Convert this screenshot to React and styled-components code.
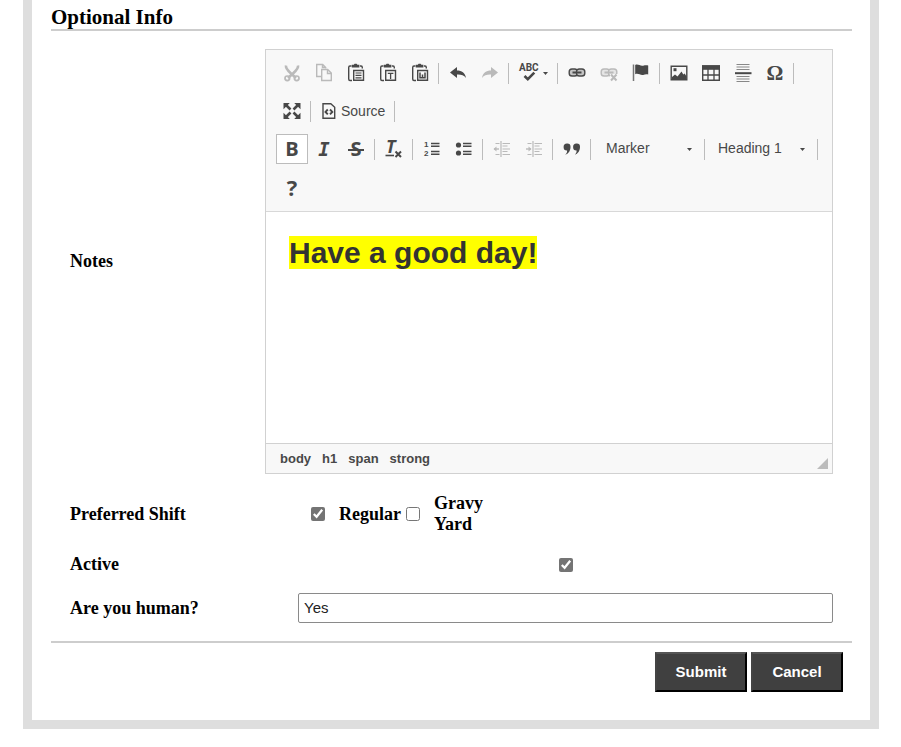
import React from "react";
import styled, { createGlobalStyle } from "styled-components";

const sans = '"Liberation Sans", Arial, sans-serif';
const serif = '"Liberation Serif", "Times New Roman", serif';
const ink = "#484848";

const GlobalStyle = createGlobalStyle`
  *, *::before, *::after { box-sizing: border-box; }
  body { margin: 0; background: #fff; color: #000; font-family: ${serif}; }
`;

const Panel = styled.form`
  margin: 0 22px 18px 23px;
  padding: 4px 18px 28px 19px;
  border: 9px solid #dedede;
  border-top: 0;
  background: #fff;
`;

const SectionTitle = styled.h2`
  margin: 0 0 18px;
  height: 27px;
  border-bottom: 2px solid #cdcdcd;
  font-size: 21px;
  line-height: 26px;
  font-weight: bold;
`;

const Row = styled.div`
  display: grid;
  grid-template-columns: 195px minmax(0, 1fr);
  align-items: center;
  padding: 0 19px;
  min-height: ${(p) => p.$height || 44}px;
`;

const labelText = `
  font-size: 18px;
  line-height: 21px;
  font-weight: bold;
`;

const Label = styled.label`${labelText}`;
const GroupLabel = styled.span`${labelText}`;

const Field = styled.div`
  display: flex;
  align-items: center;
  justify-content: ${(p) => (p.$center ? "center" : "flex-start")};
  padding-left: 33px;
`;

const Shifts = styled.div`
  display: flex;
  align-items: center;
  gap: 5px;
  padding-left: 46px;
`;

const CheckBox = styled.input.attrs({ type: "checkbox" })`
  flex: none;
  width: 14px;
  height: 14px;
  margin: 0;
  accent-color: #747474;
`;

const Choice = styled.label`
  display: flex;
  align-items: center;
  gap: 14px;
  ${labelText}
`;

const ChoiceText = styled.span`
  max-width: 64px;
`;

const TextInput = styled.input`
  width: 100%;
  height: 30px;
  padding: 0 5px 2px;
  border: 1px solid #8a8a8a;
  border-radius: 2px;
  background: #fff;
  color: #222;
  font: 15px ${sans};
`;

const Editor = styled.div`
  border: 1px solid #d1d1d1;
  font-family: ${sans};
  color: ${ink};
`;

const Toolbar = styled.div`
  padding: 4px 9px 5px 10px;
  border-bottom: 1px solid #d8d8d8;
  background: #f8f8f8;
`;

const ToolLine = styled.div`
  display: flex;
  flex-wrap: wrap;
`;

const ToolGroup = styled.div`
  display: flex;
  align-items: center;
  height: 38px;
`;

const Separator = styled.span`
  width: 1px;
  height: 21px;
  margin: 0 3px 0 2px;
  background: #bcbcbc;
`;

const ToolButton = styled.button`
  display: flex;
  align-items: center;
  justify-content: center;
  gap: 4px;
  min-width: 32px;
  height: 30px;
  padding: 0 ${(p) => (p.$wide ? 6 : 2)}px;
  border: 1px solid ${(p) => (p.$on ? "#bcbcbc" : "transparent")};
  background: ${(p) => (p.$on ? "#fff" : "transparent")};
  color: ${ink};
  opacity: ${(p) => (p.disabled ? 0.35 : 1)};
  font: 14px ${sans};
`;

const Letter = styled.span`
  font: bold 20px/20px "Open Sans", ${sans};
`;

const HelpMark = styled.span`
  font: bold 22px/22px "Open Sans", ${sans};
`;

const ItalicLetter = styled.span`
  font: italic bold 19px/20px "DejaVu Sans Mono", monospace;
`;

const StruckLetter = styled(Letter)`
  padding: 0 2px;
  background: linear-gradient(${ink}, ${ink}) 0 10px / 100% 2px no-repeat;
`;

const Omega = styled.span`
  font: bold 21px/20px ${serif};
`;

const Combo = styled.div`
  position: relative;
  width: ${(p) => p.$width}px;
`;

const ComboSelect = styled.select`
  appearance: none;
  width: 100%;
  height: 30px;
  padding: 0 24px 2px ${(p) => p.$inset}px;
  border: 0;
  background: transparent;
  color: ${ink};
  font: 14px ${sans};
`;

const ComboCaret = styled.svg`
  position: absolute;
  right: 10px;
  top: 14px;
  pointer-events: none;
`;

const EditArea = styled.div`
  height: 231px;
  padding: 23px;
  outline: 0;
  background: #fff;
  color: #333;
`;

const EditHeading = styled.h1`
  margin: 0;
  font-size: 30px;
  line-height: 36px;
  font-weight: bold;
`;

const Marked = styled.span`
  background: #ff0;
`;

const StatusBar = styled.div`
  display: flex;
  align-items: center;
  justify-content: space-between;
  height: 30px;
  padding: 0 4px 0 14px;
  border-top: 1px solid #d1d1d1;
  background: #f8f8f8;
`;

const Path = styled.nav`
  display: flex;
  gap: 11px;
`;

const PathLink = styled.a`
  color: ${ink};
  font-size: 13px;
  line-height: 16px;
  font-weight: bold;
  text-decoration: none;
`;

const Grip = styled.svg`
  align-self: flex-end;
  margin-bottom: 4px;
`;

const Actions = styled.div`
  display: flex;
  justify-content: flex-end;
  gap: 4px;
  padding: 9px 9px 0;
  border-top: 2px solid #cdcdcd;
`;

const ActionButton = styled.button`
  width: 92px;
  height: 40px;
  padding: 0 0 2px;
  border: 2px solid;
  border-color: #555 #000 #000 #444;
  background: #404040;
  color: #fff;
  font: bold 15px ${sans};
`;

const Drawing = styled.svg`
  overflow: visible;
`;

const Svg = ({ children, width = 20 }) => (
  <Drawing width={width} height="20" viewBox={`0 0 ${width} 20`} fill="none" stroke={ink} strokeWidth="1.4" aria-hidden="true">
    {children}
  </Drawing>
);

const CutIcon = () => (
  <Svg>
    <path d="M4 2.500c-.6 2.500 1.500 4.800 5 8l5 4.500M16 2.500c.6 2.500-1.500 4.800-5 8L6 15" strokeWidth="2.600" />
    <circle cx="5.300" cy="15.300" r="2.300" strokeWidth="1.700" />
    <circle cx="14.700" cy="15.300" r="2.300" strokeWidth="1.700" />
  </Svg>
);

const CopyIcon = () => (
  <Svg>
    <path d="M7 13.500H2.700v-12h6l3 3v1M8.500 1.500v3h3" />
    <path d="M7.700 6.500h6l3.600 3.600v7.400H7.700zM13.500 6.500v4h4" />
  </Svg>
);

const PasteIcon = ({ children }) => (
  <Svg>
    <path d="M5.500 3H4Q2.700 3 2.700 4.500V16q0 1.500 1.300 1.500h2M14 3h1q1.300 0 1.300 1.500v1" />
    <path d="M5.800 1.800h2l.8-1h2l.8 1h2v2.600H5.800z" fill={ink} stroke="none" />
    <path d="M7.700 7.500h9.800v9.800H7.700z" fill="#f8f8f8" />
    {children}
  </Svg>
);

const ArrowIcon = ({ flip }) => (
  <Svg>
    <path
      d="M2 9.500l7-5.500v3.500c4.800 0 8 2 9 7.500-2.200-2.800-5-3.600-9-3.400V15z"
      transform={flip ? "matrix(-1 0 0 1 20 0)" : undefined}
      fill={ink}
      stroke="none"
    />
  </Svg>
);

const SpellIcon = () => (
  <Svg>
    <text x="0" y="8" fill={ink} stroke="none" fontFamily="Roboto" fontSize="10" fontWeight="bold">ABC</text>
    <path d="M5.500 13l3.300 3.200 6.500-6.500" strokeWidth="2.600" />
  </Svg>
);

const LinkIcon = ({ broken }) => (
  <Svg>
    <rect x="2.200" y="6" width="8.300" height="7" rx="2.800" fill="#c4c4c4" />
    <rect x="9.500" y="6" width="8.300" height="7" rx="2.800" fill="#c4c4c4" />
    <path d="M5.500 9.500h9" strokeWidth="2" />
    {broken && (
      <>
        <path d="M11 11h9v8h-9z" fill="#f8f8f8" stroke="none" />
        <path d="M12 11.500l5.500 6M17.500 11.500l-5.500 6" strokeWidth="2" />
      </>
    )}
  </Svg>
);

const FlagIcon = () => (
  <Svg>
    <path d="M2.500 1.500V18" stroke="#777" strokeWidth="1.500" />
    <path d="M4.200 2c3-1.400 5 1.500 8 .7 2-.6 3.500-.6 5-.2v9c-2-.6-3.500 0-5 .5-3 .6-5-2.200-8-.7z" fill={ink} stroke="none" />
  </Svg>
);

const ImageIcon = () => (
  <Svg>
    <path d="M2.200 3.200h15.600v13.600H2.200z" />
    <path d="M3 16v-2l3-2.500L8.500 13.500l4-5 1.800 3 1.400-1 1.800 3V16z" fill={ink} stroke="none" />
    <path d="M4.500 5.200h3v3h-3z" fill={ink} stroke="none" />
  </Svg>
);

const TableIcon = () => (
  <Svg>
    <path d="M1.700 3h16.600v14.300H1.700z" />
    <path d="M1 2.300h18v4.500H1z" fill={ink} stroke="none" />
    <path d="M7 6v11M13 6v11M2 12h16" strokeWidth="1.300" />
  </Svg>
);

const RuleIcon = () => (
  <Svg>
    <path d="M3.500 1.500h13M3.500 4h13M3.500 6.500h13M3.500 13.500h13M3.500 16h13M3.500 18.500h13" stroke="#888" strokeWidth="1" />
    <path d="M2 10.200h16.500" strokeWidth="2" />
  </Svg>
);

const MaximizeIcon = () => (
  <Svg>
    <path d="M4 4l4.500 4.500M16 4l-4.500 4.500M4 16l4.500-4.500M16 16l-4.500-4.500" strokeWidth="2.600" />
    <path d="M1.500 2h6.300l-6.300 6.300zM18.500 2h-6.300l6.300 6.300zM1.500 18h6.300l-6.300-6.300zM18.500 18h-6.300l6.300-6.300z" fill={ink} stroke="none" />
  </Svg>
);

const SourceIcon = () => (
  <Svg width={16}>
    <path d="M2 2.700h7.800l3.900 3.600v11H2z" strokeWidth="1.400" />
    <path d="M6.800 8.500l-2.300 2.400 2.300 2.400M9 8.500l2.300 2.400L9 13.300" strokeWidth="1.900" />
  </Svg>
);

const ClearIcon = () => (
  <Svg>
    <text x="2" y="14" fill={ink} stroke="none" fontFamily="Open Sans" fontSize="18" fontStyle="italic" fontWeight="bold">T</text>
    <path d="M1.500 16.500H10" strokeWidth="1.600" />
    <path d="M11.500 12.500l5.500 5.500M17 12.500l-5.500 5.500" strokeWidth="2" />
  </Svg>
);

const ListIcon = ({ numbered }) => (
  <Svg>
    {numbered ? (
      <g fill={ink} stroke="none" fontFamily="Liberation Sans" fontSize="8" fontWeight="bold">
        <text x="2" y="8">1</text>
        <text x="2" y="17">2</text>
      </g>
    ) : (
      <g fill={ink} stroke="none">
        <circle cx="4.500" cy="6" r="2.600" />
        <circle cx="4.500" cy="14" r="2.600" />
      </g>
    )}
    <path d="M9 4.500h8.500M9 7.300h8.500M9 12.500h8.500M9 15.300h8.500" strokeWidth="1.400" />
  </Svg>
);

const IndentIcon = ({ outward }) => (
  <Svg>
    <path d="M3.500 4.500h4M3.500 15.500h4M10.500 4.500H18M10.500 7h5M10.500 10H18M10.500 12.500h5M10.500 15.500H18" strokeWidth="1.200" />
    <path d="M9 2v16" strokeWidth="1.200" />
    <path d="M2 10h5" strokeWidth="1.400" />
    <path d={outward ? "M1.500 10l3-2.600v5.200z" : "M7.500 10l-3-2.600v5.200z"} fill={ink} stroke="none" />
  </Svg>
);

const QuoteIcon = () => (
  <Svg>
    <path
      d="M5 4.500a3.300 3.300 0 0 1 3.500 3.300c0 4-2 7-5.300 8 1.600-1.500 2-2.800 1.900-4.300A3.400 3.400 0 0 1 1.600 8 3.400 3.400 0 0 1 5 4.500zM14.500 4.500A3.300 3.300 0 0 1 18 7.800c0 4-2 7-5.300 8 1.600-1.500 2-2.800 1.900-4.300A3.400 3.400 0 0 1 11.100 8a3.400 3.400 0 0 1 3.400-3.500z"
      fill={ink}
      stroke="none"
    />
  </Svg>
);

const Caret = () => (
  <svg width="5" height="3" viewBox="0 0 5 3" fill={ink} aria-hidden="true">
    <path d="M0 0h5L2.500 3z" />
  </svg>
);

const firstLine = [
  [
    { name: "Cut", icon: <CutIcon />, disabled: true },
    { name: "Copy", icon: <CopyIcon />, disabled: true },
    { name: "Paste", icon: <PasteIcon><path d="M9.500 10h6M9.500 12.400h6M9.500 14.800h6" strokeWidth="1.200" /></PasteIcon> },
    { name: "Paste as plain text", icon: <PasteIcon><path d="M9.800 10.300h5.600M12.600 10.300V16" strokeWidth="1.300" /></PasteIcon> },
    { name: "Paste from Word", icon: <PasteIcon><path d="M10 9.500v5.200h5V9.500M12.500 11.500v3" strokeWidth="1.500" /></PasteIcon> },
  ],
  [
    { name: "Undo", icon: <ArrowIcon /> },
    { name: "Redo", icon: <ArrowIcon flip />, disabled: true },
  ],
  [{ name: "Spell check", icon: <><SpellIcon /><Caret /></>, menu: true, wide: true }],
  [
    { name: "Link", icon: <LinkIcon /> },
    { name: "Unlink", icon: <LinkIcon broken />, disabled: true },
    { name: "Anchor", icon: <FlagIcon /> },
  ],
  [
    { name: "Image", icon: <ImageIcon /> },
    { name: "Table", icon: <TableIcon /> },
    { name: "Horizontal line", icon: <RuleIcon /> },
    { name: "Special character", icon: <Omega>Ω</Omega> },
  ],
  [{ name: "Maximize", icon: <MaximizeIcon /> }],
  [{ name: "Source", icon: <><SourceIcon />Source</>, wide: true }],
];

const secondLine = [
  [
    { name: "Bold", icon: <Letter>B</Letter>, on: true },
    { name: "Italic", icon: <ItalicLetter>I</ItalicLetter> },
    { name: "Strikethrough", icon: <StruckLetter>S</StruckLetter> },
  ],
  [{ name: "Remove format", icon: <ClearIcon /> }],
  [
    { name: "Numbered list", icon: <ListIcon numbered /> },
    { name: "Bulleted list", icon: <ListIcon /> },
  ],
  [
    { name: "Decrease indent", icon: <IndentIcon outward />, disabled: true },
    { name: "Increase indent", icon: <IndentIcon />, disabled: true },
  ],
  [{ name: "Block quote", icon: <QuoteIcon /> }],
];

const Tool = ({ tool }) => (
  <ToolButton
    type="button"
    aria-label={tool.name}
    aria-pressed={tool.on}
    aria-haspopup={tool.menu}
    disabled={tool.disabled}
    $on={tool.on}
    $wide={tool.wide}
  >
    {tool.icon}
  </ToolButton>
);

const Groups = ({ groups }) =>
  groups.map((tools) => (
    <ToolGroup key={tools[0].name}>
      {tools.map((tool) => <Tool key={tool.name} tool={tool} />)}
      <Separator />
    </ToolGroup>
  ));

const StyleCombo = ({ label, value, width, inset }) => (
  <ToolGroup>
    <Combo $width={width}>
      <ComboSelect aria-label={label} defaultValue={value} $inset={inset}>
        <option>{value}</option>
      </ComboSelect>
      <ComboCaret width="5" height="3" viewBox="0 0 5 3" fill={ink} aria-hidden="true">
        <path d="M0 0h5L2.500 3z" />
      </ComboCaret>
    </Combo>
    <Separator />
  </ToolGroup>
);

export default function App() {
  return (
    <>
      <GlobalStyle />
      <Panel onSubmit={(e) => e.preventDefault()}>
        <SectionTitle>Optional Info</SectionTitle>
        <Row>
          <GroupLabel id="notes-label">Notes</GroupLabel>
          <Editor>
            <Toolbar role="toolbar" aria-label="Formatting">
              <ToolLine><Groups groups={firstLine} /></ToolLine>
              <ToolLine>
                <Groups groups={secondLine} />
                <StyleCombo label="Styles" value="Marker" width={108} inset={12} />
                <StyleCombo label="Format" value="Heading 1" width={107} inset={10} />
                <ToolGroup><Tool tool={{ name: "Help", icon: <HelpMark>?</HelpMark> }} /></ToolGroup>
              </ToolLine>
            </Toolbar>
            <EditArea role="textbox" aria-labelledby="notes-label" contentEditable suppressContentEditableWarning spellCheck={false}>
              <EditHeading><Marked><strong>Have a good day!</strong></Marked></EditHeading>
            </EditArea>
            <StatusBar>
              <Path aria-label="Elements path">
                {["body", "h1", "span", "strong"].map((tag) => (
                  <PathLink key={tag} href={`#${tag}`}>{tag}</PathLink>
                ))}
              </Path>
              <Grip width="11" height="11" viewBox="0 0 11 11" fill="#bcbcbc" aria-hidden="true">
                <path d="M11 0v11H0z" />
              </Grip>
            </StatusBar>
          </Editor>
        </Row>
        <Row $height={80}>
          <GroupLabel id="shift-label">Preferred Shift</GroupLabel>
          <Shifts role="group" aria-labelledby="shift-label">
            <Choice><CheckBox defaultChecked /><ChoiceText>Regular</ChoiceText></Choice>
            <Choice><CheckBox /><ChoiceText>Gravy Yard</ChoiceText></Choice>
          </Shifts>
        </Row>
        <Row $height={20}>
          <Label htmlFor="active">Active</Label>
          <Field $center><CheckBox id="active" defaultChecked /></Field>
        </Row>
        <Row $height={66}>
          <Label htmlFor="human">Are you human?</Label>
          <Field><TextInput id="human" type="text" defaultValue="Yes" /></Field>
        </Row>
        <Actions>
          <ActionButton type="submit">Submit</ActionButton>
          <ActionButton type="button">Cancel</ActionButton>
        </Actions>
      </Panel>
    </>
  );
}
